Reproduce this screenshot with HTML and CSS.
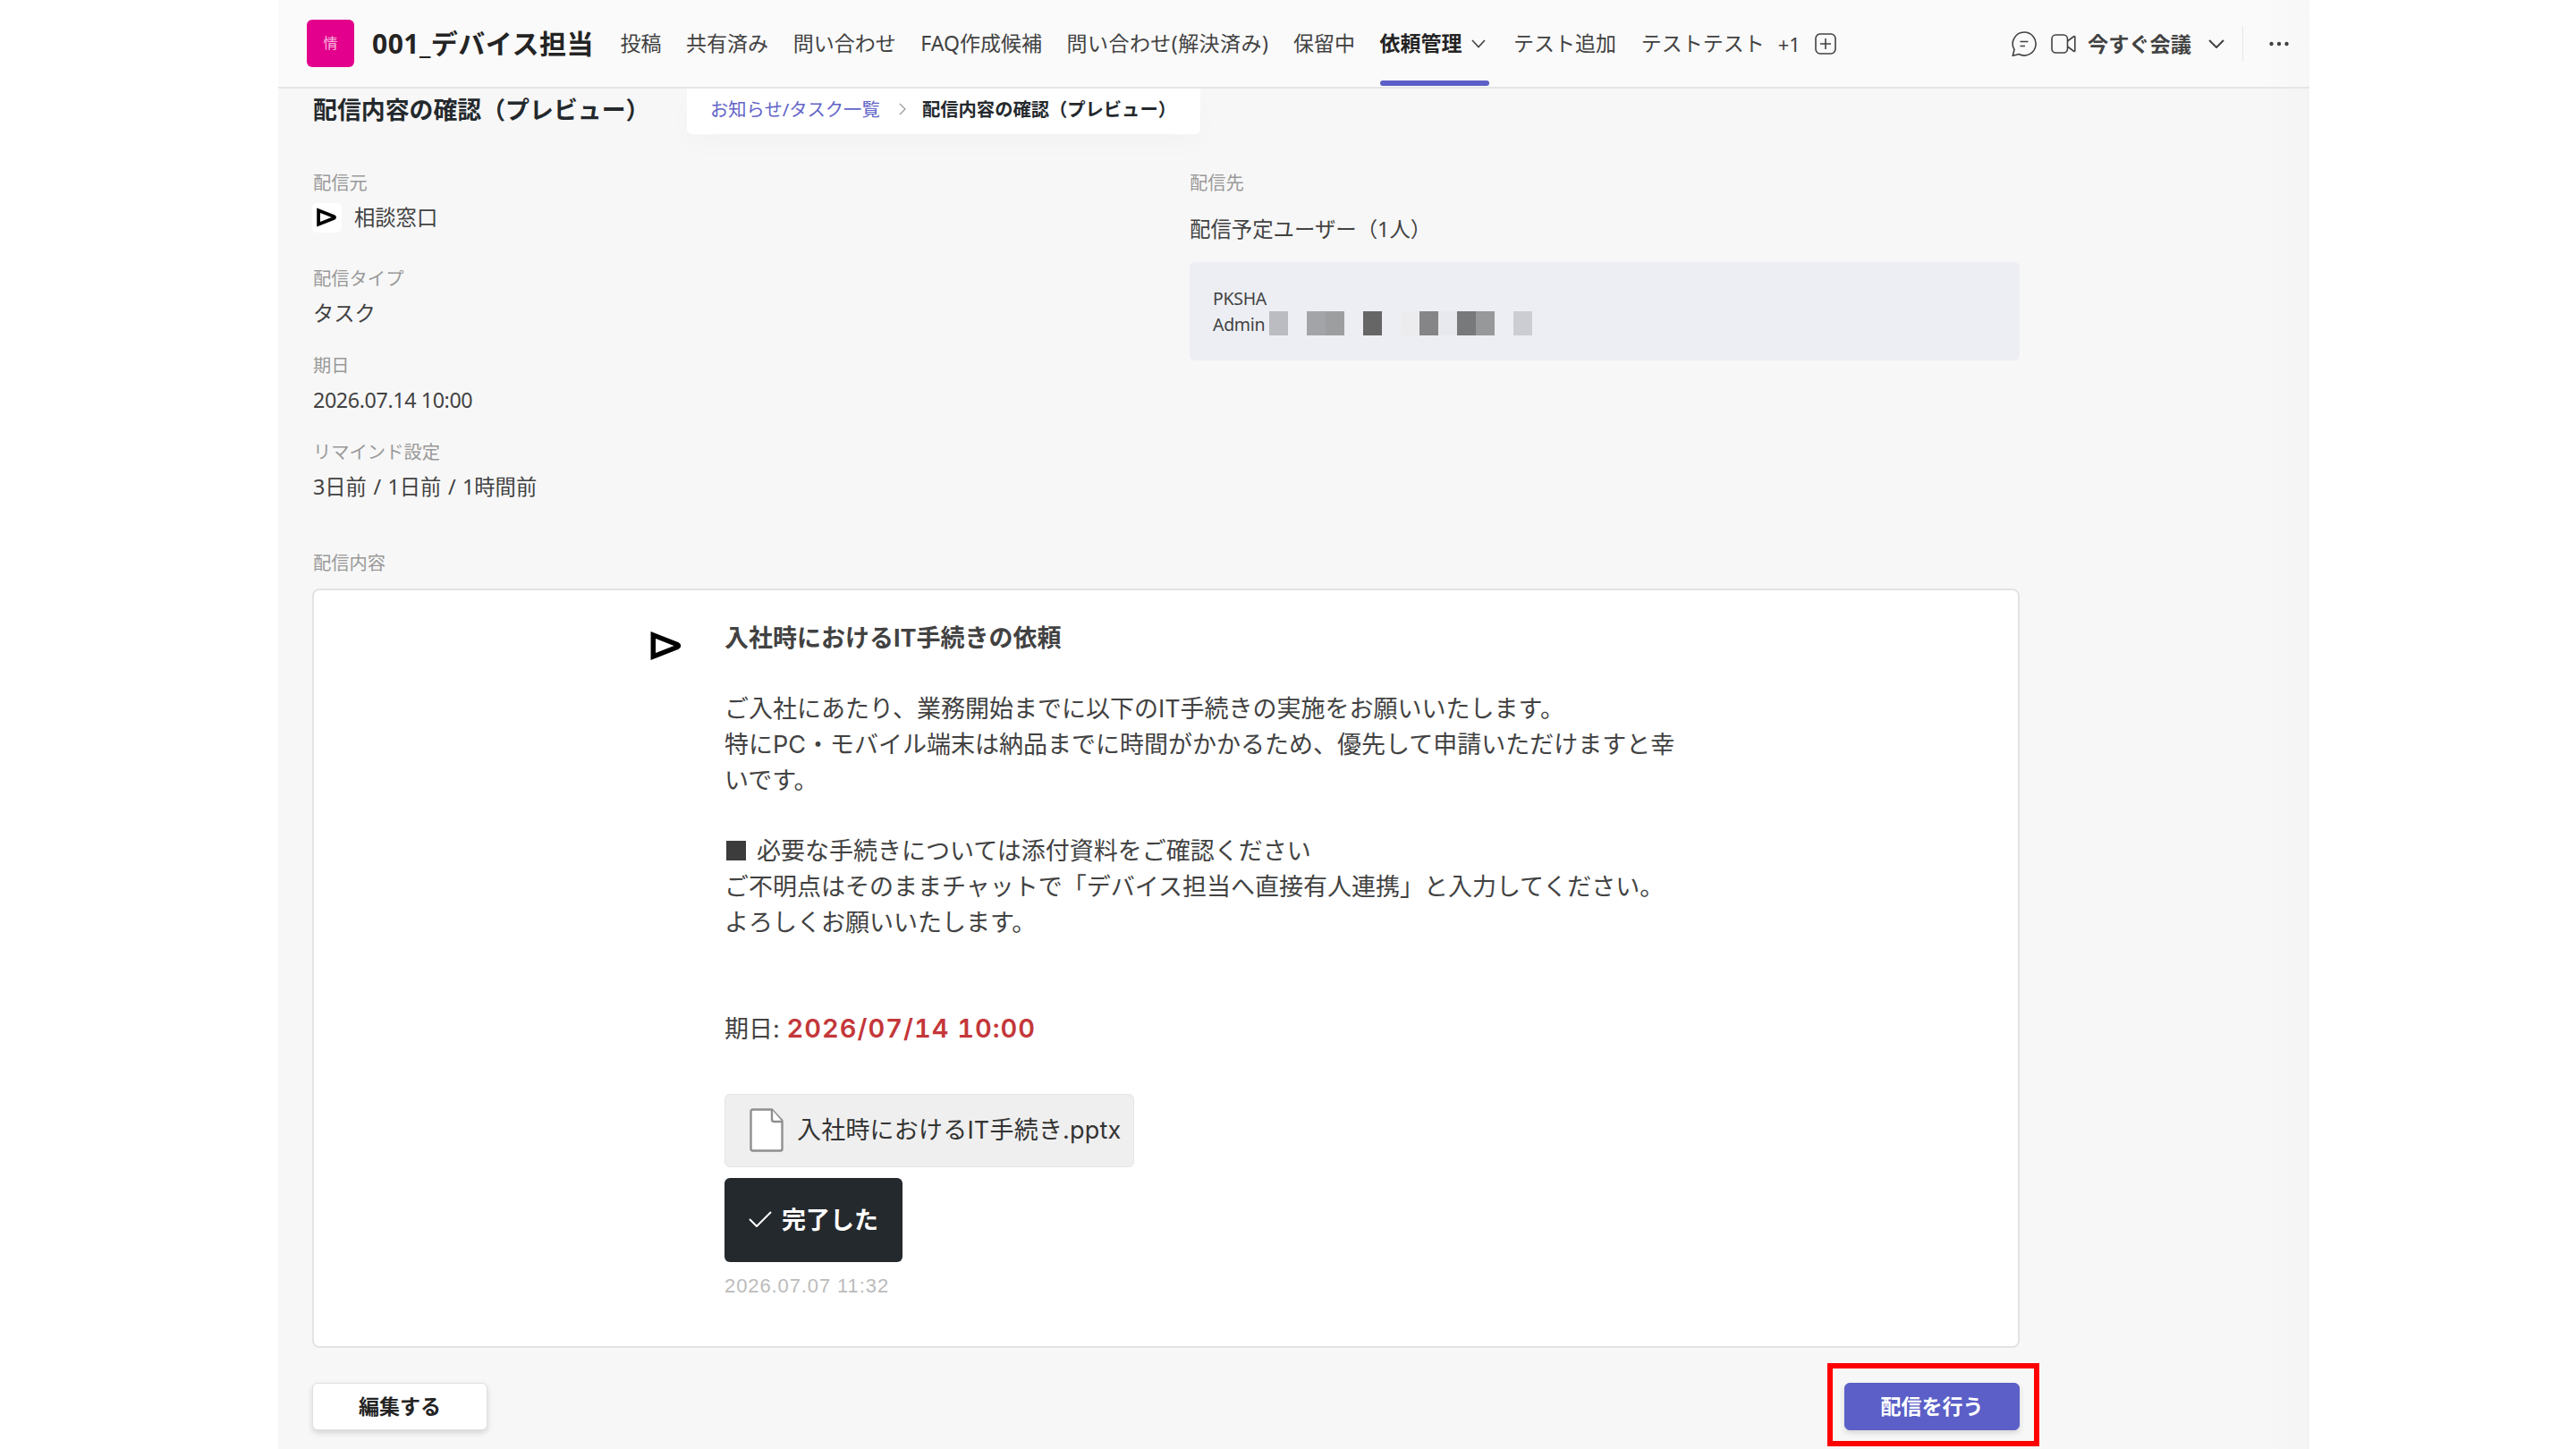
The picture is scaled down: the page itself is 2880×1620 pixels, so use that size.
FILE: index.html
```html
<!DOCTYPE html>
<html lang="ja">
<head>
<meta charset="utf-8">
<title>001_デバイス担当</title>
<link rel="stylesheet" href="styles.css">
</head>
<body>
<div class="app">
  <header class="topbar">
    <div class="team-icon">情</div>
    <h1 class="team-name">001_デバイス担当</h1>
    <nav class="tabs">
      <a class="tab">投稿</a>
      <a class="tab">共有済み</a>
      <a class="tab">問い合わせ</a>
      <a class="tab">FAQ作成候補</a>
      <a class="tab tab-wide">問い合わせ(解決済み)</a>
      <a class="tab">保留中</a>
      <a class="tab tab-active">依頼管理
        <svg class="tab-chevron" viewBox="0 0 16 10"><path d="M1 1l7 7.5L15 1"/></svg>
      </a>
      <a class="tab">テスト追加</a>
      <a class="tab">テストテスト</a>
    </nav>
    <span class="more-tabs">+1</span>
    <svg class="icon-add" viewBox="0 0 24 24"><rect x="1" y="1" width="22" height="22" rx="5"/><path d="M12 6v12M6 12h12"/></svg>
    <div class="actions">
      <svg class="icon-chat" viewBox="0 0 28 28"><path d="M14 1a13 13 0 1 1-6 24.500L1.300 27.300 3 20.500A13 13 0 0 1 14 1zM9.500 11.500h9M9.500 16.500h5.500"/></svg>
      <svg class="icon-video" viewBox="0 0 28 22"><rect x="1" y="1" width="17.500" height="20" rx="4.500"/><path d="M18.500 8l7-5.200q1.300-.6 1.300.8v14.800q0 1.400-1.300.8l-7-5.200"/></svg>
      <span class="meet">今すぐ会議</span>
      <svg class="meet-chevron" viewBox="0 0 18 10"><path d="M1 1l8 8 8-8"/></svg>
      <span class="divider"></span>
      <svg class="icon-dots" viewBox="0 0 22 6"><circle cx="2.500" cy="3" r="2.200"/><circle cx="11" cy="3" r="2.200"/><circle cx="19.500" cy="3" r="2.200"/></svg>
    </div>
  </header>

  <div class="page-head">
    <h2 class="page-title">配信内容の確認（プレビュー）</h2>
    <div class="breadcrumb">
      <a class="crumb-link">お知らせ/タスク一覧</a>
      <svg class="crumb-chevron" viewBox="0 0 8 14"><path d="M1 1l6 6-6 6"/></svg>
      <span class="crumb-current">配信内容の確認（プレビュー）</span>
    </div>
  </div>

  <main class="content">
    <div class="info">
      <dl class="fields">
        <dt class="label">配信元</dt>
        <dd class="value sender">
          <span class="sender-icon"><svg viewBox="0 0 33 31"><path d="M3 4.500L27.500 14q2.800 1.500 0 3L3 26.500z"/></svg></span>相談窓口
        </dd>
        <dt class="label">配信タイプ</dt>
        <dd class="value">タスク</dd>
        <dt class="label">期日</dt>
        <dd class="value value-date">2026.07.14 10:00</dd>
        <dt class="label">リマインド設定</dt>
        <dd class="value value-reminders">3日前 / 1日前 / 1時間前</dd>
      </dl>
      <section class="recipients">
        <div class="label">配信先</div>
        <div class="recipient-count">配信予定ユーザー（1人）</div>
        <div class="recipient-box">
          <div>PKSHA</div>
          <div class="recipient-row">
            <span class="recipient-name">Admin</span>
            <span class="mosaic"><i class="m1"></i><i></i><i class="m2"></i><i class="m3"></i><i></i><i class="m4"></i><i></i><i class="m5"></i><i class="m6"></i><i class="m7"></i><i class="m8"></i><i class="m9"></i><i></i><i class="m10"></i></span>
          </div>
        </div>
      </section>
    </div>

    <div class="label label-body">配信内容</div>
    <section class="card">
      <svg class="avatar" viewBox="0 0 33 31"><path d="M3 4.500L27.500 14q2.800 1.500 0 3L3 26.500z"/></svg>
      <div class="message">
        <h3 class="message-title">入社時におけるIT手続きの依頼</h3>
        <p class="message-text">ご入社にあたり、業務開始までに以下のIT手続きの実施をお願いいたします。<br>特にPC・モバイル端末は納品までに時間がかかるため、優先して申請いただけますと幸<br>いです。<br><br><span class="square"></span>必要な手続きについては添付資料をご確認ください<br>ご不明点はそのままチャットで「デバイス担当へ直接有人連携」と入力してください。<br>よろしくお願いいたします。</p>
        <p class="due">期日: <strong class="due-date">2026/07/14 10:00</strong></p>
        <div class="attachment">
          <svg class="icon-file" viewBox="0 0 38 49"><path d="M3 1.500h22L36.500 14v31.500q0 2-2 2H3.500q-2 0-2-2V3.500q0-2 2-2z"/><path d="M25 1.500v11q0 2.500 2.500 2.500h9"/></svg>
          <span class="file-name">入社時におけるIT手続き.pptx</span>
        </div>
        <button class="done"><svg class="icon-check" viewBox="0 0 26 18"><path d="M1 9l8 8L25 1"/></svg>完了した</button>
        <div class="time">2026.07.07 11:32</div>
      </div>
    </section>

    <footer class="footer">
      <button class="btn">編集する</button>
      <div class="send-wrap"><button class="btn btn-primary">配信を行う</button><span class="highlight"></span></div>
    </footer>
  </main>
</div>
</body>
</html>
```

FILE: styles.css
```css
* { box-sizing: border-box; }
body {
  margin: 0;
  height: 1620px;
  overflow: hidden;
  background: #fff;
  color: #424242;
  font-family: "Noto Sans", "Noto Sans CJK JP", sans-serif;
  text-spacing-trim: space-all;
}
h1, h2, h3, p, dl, dd { margin: 0; }
button { border: 0; padding: 0; font-family: inherit; }
svg { display: block; fill: none; stroke: #424242; stroke-width: 1.6; flex: none; }

.app {
  width: 2271px;
  height: 1620px;
  margin-left: 311px;
  background: linear-gradient(90deg, #f7f7f7 98%, #f4f4f4);
}

/* Channel header */
.topbar {
  display: flex;
  align-items: center;
  height: 99px;
  padding-left: 32px;
  background: linear-gradient(90deg, #fafafa 98%, #f7f7f7);
  border-bottom: 2px solid #e6e6e6;
  white-space: nowrap;
}
.team-icon {
  width: 53px;
  height: 53px;
  border-radius: 6px;
  background: #e3008c;
  color: #f8b8de;
  font-size: 16px;
  line-height: 53px;
  text-align: center;
}
.team-name {
  width: 297.5px;
  padding-left: 20px;
  color: #242424;
  font-size: 30px;
  font-weight: 700;
  line-height: 40px;
  letter-spacing: 0.5px;
}
.tabs { display: flex; gap: 27.6px; height: 97px; }
.tab { font-size: 23px; line-height: 97px; }
.tab-wide { letter-spacing: 0.45px; }
.tab-active {
  display: flex;
  align-items: center;
  gap: 10px;
  position: relative;
  width: 122px;
  color: #242424;
  font-weight: 700;
}
.tab-active::after {
  content: "";
  position: absolute;
  left: 0;
  bottom: 1px;
  width: 122px;
  height: 6px;
  border-radius: 3px;
  background: #5b5fc7;
}
.tab-chevron { width: 16px; height: 10px; }
.more-tabs { margin-left: 15px; font-size: 22px; width: 41px; }
.icon-add { width: 24px; height: 24px; }
.actions { display: flex; align-items: center; margin-left: auto; padding-right: 23px; }
.icon-chat { width: 28px; height: 28px; }
.icon-video { width: 28px; height: 22px; margin-left: 16px; }
.meet { width: 116px; margin: -2px 0 0 13px; font-size: 23.2px; font-weight: 700; }
.meet-chevron { width: 18px; height: 10px; margin-left: 19px; stroke-width: 2; }
.divider { width: 1px; height: 40px; margin: 0 29px 0 20px; background: #e8e8e8; }
.icon-dots { width: 22px; height: 6px; fill: #424242; stroke: none; }

/* Page title and breadcrumb */
.page-head { display: flex; height: 51px; padding-left: 39px; }
.page-title {
  width: 418px;
  color: #24292d;
  font-size: 26.9px;
  font-weight: 700;
  line-height: 47px;
  white-space: nowrap;
}
.breadcrumb {
  display: flex;
  align-items: center;
  width: 574px;
  height: 51px;
  padding: 0 0 5px 26px;
  border-radius: 0 0 6px 6px;
  background: #fff;
  box-shadow: 0 12px 28px rgba(0, 0, 0, 0.02);
  font-size: 20.3px;
  line-height: 46px;
  white-space: nowrap;
}
.crumb-link { width: 211px; color: #6264c7; }
.crumb-chevron { width: 8px; height: 14px; stroke: #999; stroke-width: 1.2; }
.crumb-current { margin-left: 18px; color: #24292d; font-weight: 700; }

/* Delivery details */
.content { width: 1909px; margin-left: 38px; }
.info { display: flex; height: 464px; padding-top: 39px; }
.fields { width: 981px; padding-left: 1px; }
.label { color: #999; font-size: 20.3px; line-height: 30px; }
.value { margin: 6px 0 25px; font-size: 23.3px; line-height: 36px; }
.value-date { letter-spacing: -0.4px; }
.value-reminders { word-spacing: 1.4px; }
.sender { display: flex; align-items: center; gap: 14px; margin: 4px 0 33px -1px; line-height: 40px; }
.sender-icon {
  display: flex;
  align-items: center;
  justify-content: center;
  width: 33px;
  height: 33px;
  border-radius: 5px;
  background: #fff;
}
.sender-icon svg { width: 23px; height: 22px; stroke: #000; stroke-width: 5.4; }
.recipients { width: 928px; }
.recipient-count { margin-top: 17px; font-size: 23.4px; line-height: 40px; }
.recipient-box {
  height: 110px;
  margin-top: 17px;
  padding: 26px;
  border-radius: 6px;
  background: #edeef3;
  font-size: 19.5px;
  line-height: 29px;
  letter-spacing: -0.3px;
}
.recipient-row { display: flex; }
.recipient-name { width: 63px; }
.mosaic { display: flex; height: 27px; }
.mosaic i { width: 21px; }
.mosaic .m1 { background: #bbbcc1; }
.mosaic .m2 { background: #a3a4a7; }
.mosaic .m3 { background: #9d9ea0; }
.mosaic .m4 { background: #666; }
.mosaic .m5 { background: #ececee; }
.mosaic .m6 { background: #858587; }
.mosaic .m7 { background: #e8e9ee; }
.mosaic .m8 { background: #78797b; }
.mosaic .m9 { background: #979899; }
.mosaic .m10 { background: #cccdd2; }

/* Message preview */
.label-body { height: 44px; padding-left: 1px; }
.card {
  display: flex;
  height: 849px;
  padding: 34px 0 0 376px;
  border: 2px solid #e3e3e3;
  border-radius: 8px;
  background: #fff;
}
.avatar { width: 36px; height: 34px; margin: 11px 47px 0 0; stroke: #000; stroke-width: 5; }
.message {
  font-family: "Inter", "Noto Sans CJK JP", sans-serif;
  font-size: 27px;
  line-height: 39.7px;
  white-space: nowrap;
}
.message-title { margin-bottom: 39.7px; font-size: 27px; font-weight: 700; }
.square { display: inline-block; width: 22px; height: 22px; margin: 0 12px -1px 2px; background: #3c3c3c; }
.due { height: 40px; margin-top: 78.4px; }
.due-date {
  color: #c4373a;
  font-size: 29px;
  font-weight: 600;
  font-variant-numeric: tabular-nums;
  letter-spacing: 1px;
}
.attachment {
  display: flex;
  align-items: center;
  gap: 15px;
  width: 458px;
  height: 82px;
  margin-top: 53px;
  padding-left: 27px;
  border: 1px solid #e4e4e4;
  border-radius: 6px;
  background: #efefef;
  color: #333;
}
.file-name { letter-spacing: 0.2px; }
.icon-file { width: 38px; height: 49px; fill: #fff; stroke: #8f8f8f; stroke-width: 2.4; }
.done {
  display: flex;
  align-items: center;
  gap: 11px;
  width: 199px;
  height: 94px;
  margin-top: 12px;
  padding: 0 0 2px 27px;
  border-radius: 6px;
  background: #24292d;
  color: #fff;
  font-size: 27px;
  font-weight: 700;
}
.icon-check { width: 26px; height: 18px; stroke: #fff; stroke-width: 2; }
.time {
  margin-top: 11px;
  color: #bbb;
  font-family: "Liberation Sans", sans-serif;
  font-size: 22px;
  line-height: 32px;
  letter-spacing: 0.9px;
}

/* Page actions */
.footer { display: flex; justify-content: space-between; padding-top: 39px; }
.btn {
  display: block;
  width: 196px;
  height: 53px;
  border: 1px solid #e0e0e0;
  border-radius: 6px;
  background: #fff;
  box-shadow: 0 3px 6px rgba(0, 0, 0, 0.14);
  color: #242424;
  font-size: 23px;
  font-weight: 700;
  line-height: 51px;
}
.btn-primary { border-color: #5b5fc7; background: #5b5fc7; color: #fff; }
.send-wrap { position: relative; }
.highlight {
  position: absolute;
  left: -19px;
  top: -22px;
  width: 237px;
  height: 93px;
  border: 6px solid #f00;
}
```
